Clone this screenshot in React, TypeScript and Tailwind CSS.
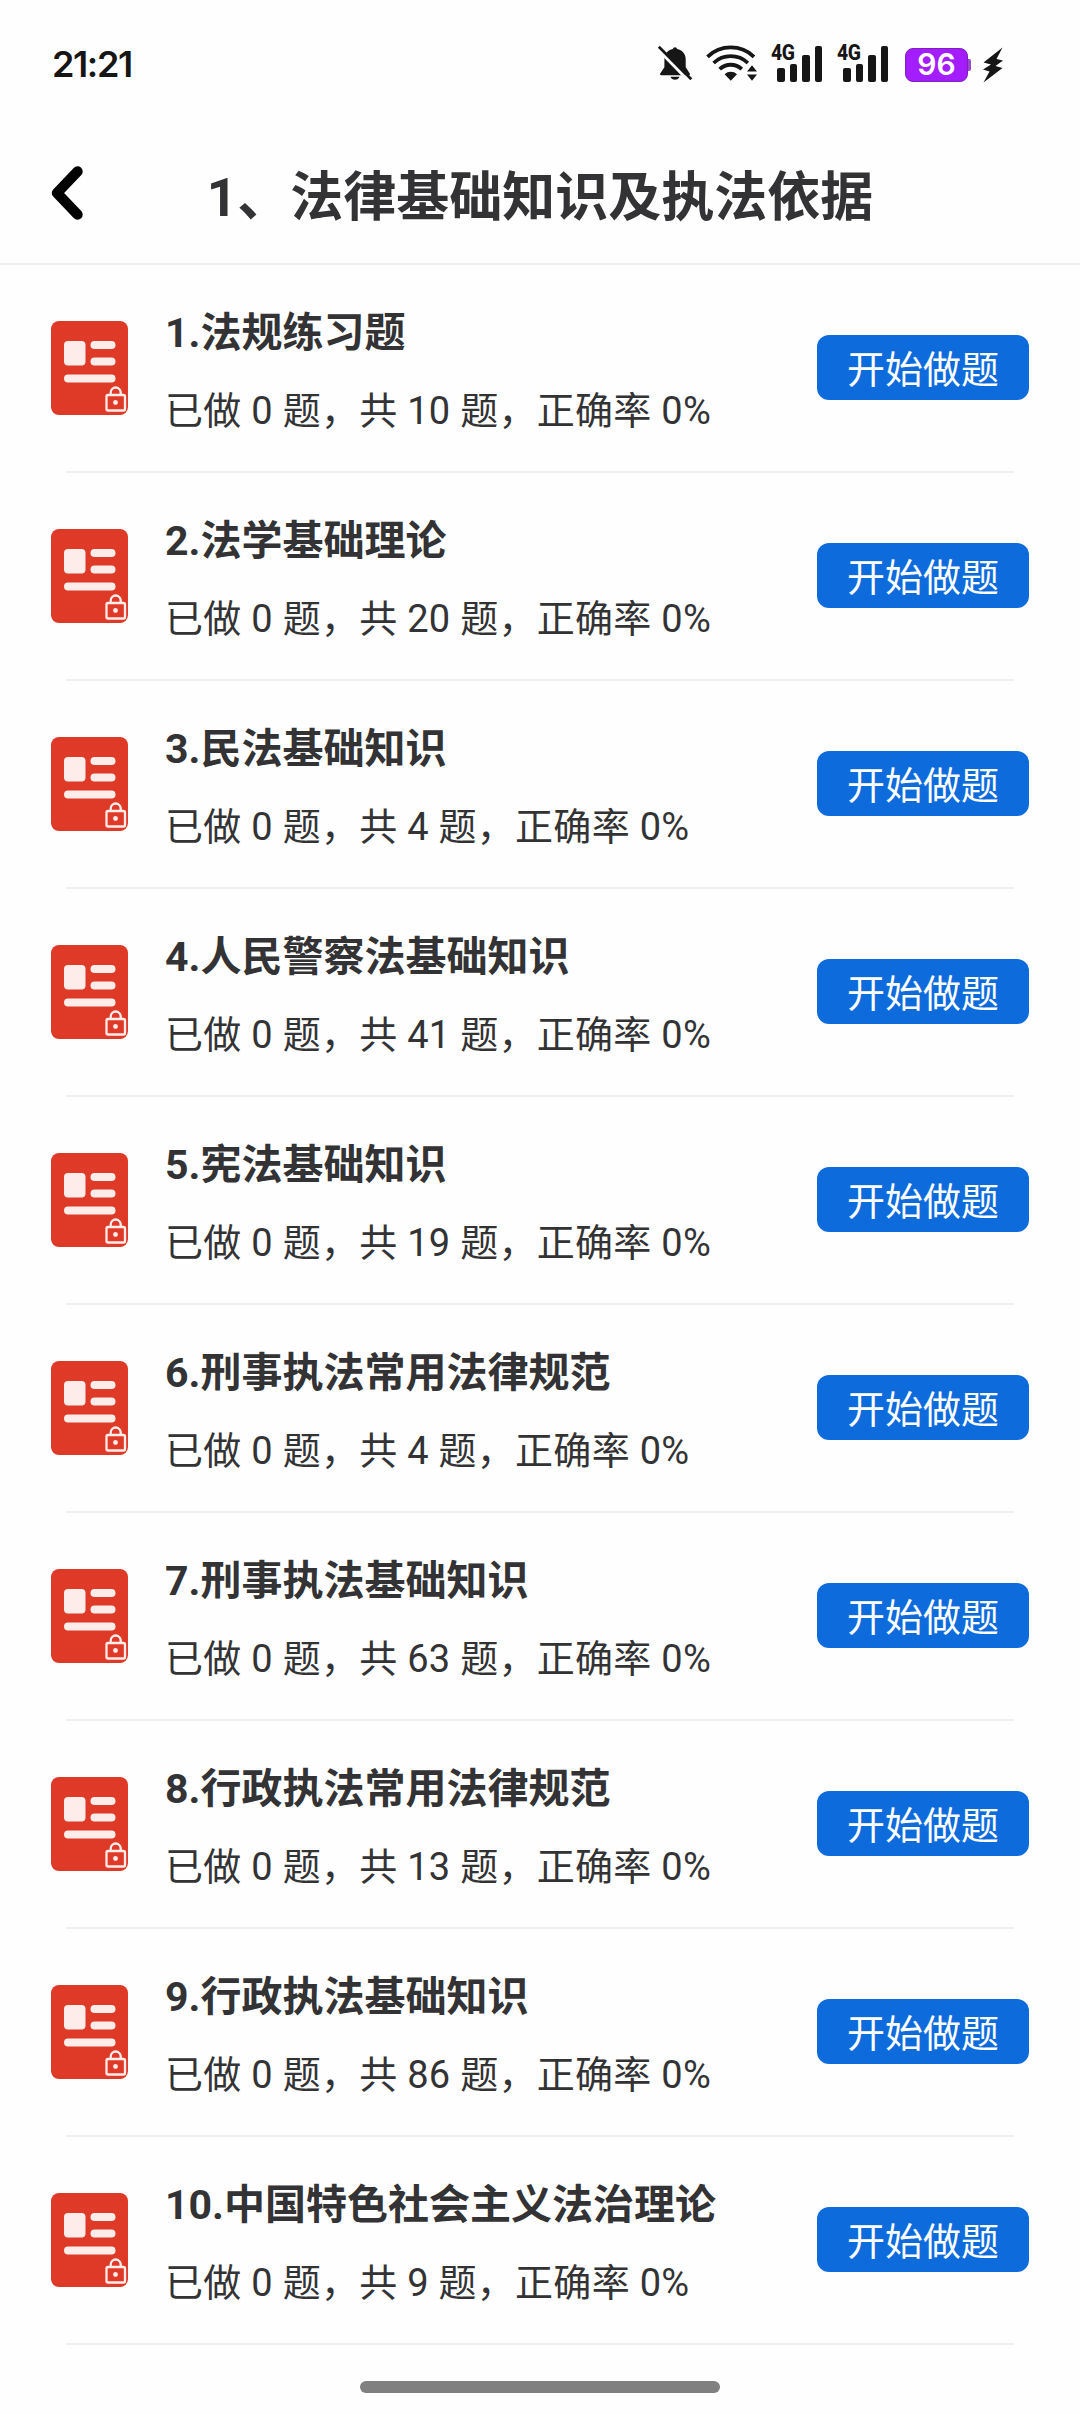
import React from 'react';

interface Chapter {
  title: string;
  done: number;
  total: number;
  rate: number;
}

const chapters: Chapter[] = [
  { title: '1.法规练习题', done: 0, total: 10, rate: 0 },
  { title: '2.法学基础理论', done: 0, total: 20, rate: 0 },
  { title: '3.民法基础知识', done: 0, total: 4, rate: 0 },
  { title: '4.人民警察法基础知识', done: 0, total: 41, rate: 0 },
  { title: '5.宪法基础知识', done: 0, total: 19, rate: 0 },
  { title: '6.刑事执法常用法律规范', done: 0, total: 4, rate: 0 },
  { title: '7.刑事执法基础知识', done: 0, total: 63, rate: 0 },
  { title: '8.行政执法常用法律规范', done: 0, total: 13, rate: 0 },
  { title: '9.行政执法基础知识', done: 0, total: 86, rate: 0 },
  { title: '10.中国特色社会主义法治理论', done: 0, total: 9, rate: 0 },
];

const MutedBell = () => (
  <svg className="w-[36px] h-[36px]" viewBox="0 0 36 36" fill="none">
    <path d="M18 2.2c1.2 0 2 .8 2.2 1.9 5 1.1 8.5 5 8.5 10.200v8l4.100 6.200c.5.8 0 1.700-.9 1.700H4.200c-.9 0-1.500-.9-1-1.700l4.200-6.200v-8c0-5.200 3.400-9.100 8.400-10.200.2-1.100 1-1.900 2.200-1.900z" fill="#161616" />
    <path d="M13.500 31.700h9c-.6 1.900-2.400 3-4.500 3s-3.900-1.100-4.500-3z" fill="#161616" />
    <path d="M-.5 2.700 31.500 35.800" stroke="#fefefe" strokeWidth="3" />
    <path d="M1.800 1.800 34.300 34.200" stroke="#161616" strokeWidth="2.700" />
  </svg>
);

const Wifi = () => (
  <svg className="w-[52px] h-[36px]" viewBox="0 0 52 36" fill="none">
    <g stroke="#161616" strokeWidth="3.800">
      <path d="M1.500 11.800a33.500 33.500 0 0 1 46.500 0" />
      <path d="M7.600 18a24.800 24.800 0 0 1 34.300 0" />
      <path d="M13.700 24.200a16 16 0 0 1 22.100 0" />
    </g>
    <path d="M18.600 29.200c3.500-3.300 8.900-3.300 12.400 0L24.800 35.700z" fill="#161616" />
    <path d="M46 20.300 51 26.500H41zM46 35.700l5-6.200H41z" fill="#161616" />
  </svg>
);

const Signal = () => (
  <div className="relative w-[52px] h-[37px]">
    <span className="absolute left-0 -top-px font-['Roboto'] text-[22px] leading-[18px] font-extrabold tracking-[-0.5px] origin-left scale-x-[0.88]">
      4G
    </span>
    <div className="flex h-full items-end gap-[5px] pl-[6px]">
      <i className="w-[7.500px] h-[14px] rounded-[2px] bg-[#161616]" />
      <i className="w-[7.500px] h-[18px] rounded-[2px] bg-[#161616]" />
      <i className="w-[7.500px] h-[27px] rounded-[2px] bg-[#161616]" />
      <i className="w-[7.500px] h-[36px] rounded-[2px] bg-[#161616]" />
    </div>
  </div>
);

const StatusBar = () => (
  <div className="flex h-32 items-center pl-[52px] pr-[76px] text-[#161616]">
    <span className="font-['Inter'] text-[36px] leading-none font-semibold tracking-[-1.4px]">21:21</span>
    <div className="ml-auto flex items-center pb-[2px]">
      <MutedBell />
      <div className="ml-[13px]"><Wifi /></div>
      <div className="ml-[13px]"><Signal /></div>
      <div className="ml-[14px]"><Signal /></div>
      <div className="ml-[16px] mt-[3px] flex h-[34px] w-[63px] items-center justify-center rounded-[8px] border border-[#7d20bd] bg-[#a31dff] font-['Inter'] text-[30px] font-semibold text-white">
        96
      </div>
      <div className="mt-[3px] h-[12px] w-[3px] rounded-r-[2px] bg-[#9a4bc9]" />
      <svg className="ml-[11px] mt-[3px] h-[36px] w-[22px]" viewBox="0 0 22 36" fill="#161616">
        <path d="M20.500.5 1.500 15.500 9 17.500 1 22.500 7.500 24.500 1.500 35.500 20.500 21 13.500 19 21 13.500 14.500 12z" />
      </svg>
    </div>
  </div>
);

const LockedPaper = () => (
  <svg className="h-[96px] w-[78px] shrink-0" viewBox="0 0 78 96" fill="none">
    <rect x="0" y="1" width="77" height="94" rx="8" fill="#df3928" />
    <g fill="#fdecea">
      <rect x="13" y="21" width="21.500" height="24.500" rx="4" />
      <rect x="39.500" y="21" width="25" height="8" rx="4" />
      <rect x="39.500" y="37.500" width="25" height="8" rx="4" />
      <rect x="13" y="54.500" width="51.500" height="8" rx="4" />
    </g>
    <rect x="55.500" y="75" width="18.500" height="15.500" rx="1.500" stroke="#fdecea" strokeWidth="2.300" />
    <path d="M59.700 75v-2.500a5 5 0 0 1 10 0V75" stroke="#fdecea" strokeWidth="2.300" />
    <circle cx="64.500" cy="82.500" r="2.400" fill="#fdecea" />
  </svg>
);

const ChapterRow = ({ chapter }: { chapter: Chapter }) => (
  <li className="flex h-[208px] flex-col">
    <div className="flex flex-1 items-center px-[51px]">
      <LockedPaper />
      <div className="ml-[36px] flex flex-1 flex-col pt-[8px] whitespace-nowrap">
        <h2 className="text-[41px] leading-[60px] font-bold">{chapter.title}</h2>
        <p className="mt-[18px] text-[38px] leading-[60px] tracking-[0.28px]">
          已做 {chapter.done} 题，共 {chapter.total} 题，正确率 {chapter.rate}%
        </p>
      </div>
      <button className="mb-[2px] h-[65px] w-[212px] shrink-0 rounded-[12px] bg-[#0d6bdc] pt-[5px] text-[38px] leading-[60px] text-white">
        开始做题
      </button>
    </div>
    <div className="mx-[66px] h-[2px] bg-[#f0f0f0]" />
  </li>
);

const App = () => {
  return (
    <div className="flex h-[2414px] w-[1080px] flex-col bg-[#fefefe] font-['Roboto','Noto_Sans_CJK_SC',sans-serif] text-[#333335]">
      <StatusBar />

      {/* Title bar */}
      <header className="flex h-[137px] items-center border-b-2 border-[#eeeeee] px-[51px]">
        <svg className="mb-[6px] h-[54px] w-[32px]" viewBox="0 0 32 54" fill="none">
          <path d="M26.500 5.500 6 27l20.500 21.500" stroke="#000" strokeWidth="10.500" strokeLinecap="round" strokeLinejoin="round" />
        </svg>
        <h1 className="flex-1 pt-[5px] pr-[32px] text-center text-[53px] leading-none font-bold">
          1、法律基础知识及执法依据
        </h1>
      </header>

      <ul>
        {chapters.map((chapter) => (
          <ChapterRow key={chapter.title} chapter={chapter} />
        ))}
      </ul>

      {/* Home indicator */}
      <div className="mx-auto mt-auto mb-[21px] h-[12px] w-[360px] rounded-full bg-[#808080]" />
    </div>
  );
};

export default App;
